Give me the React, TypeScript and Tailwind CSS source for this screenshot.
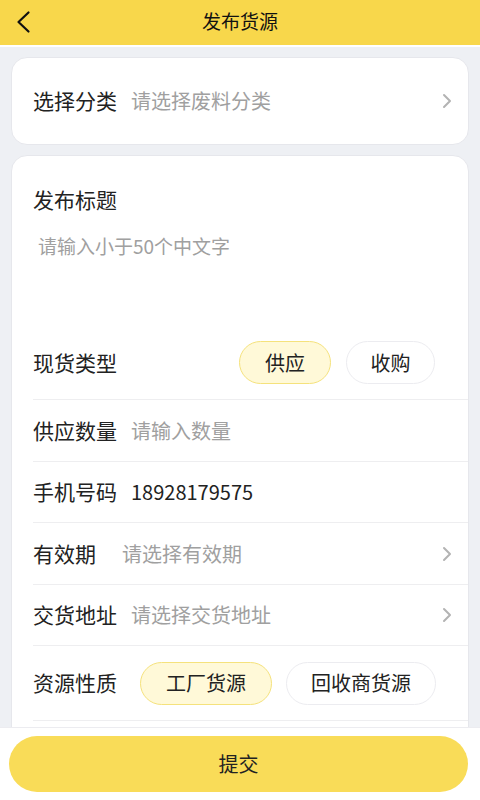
const font = { fontFamily: '"Noto Sans CJK SC", "Noto Sans", sans-serif' };

function Arrow() {
  return (
    <svg width="10" height="16" viewBox="0 0 10 16" className="shrink-0">
      <path d="M2 2 L8 8 L2 14" fill="none" stroke="#b3b3b3" strokeWidth="2" strokeLinecap="round" strokeLinejoin="round" />
    </svg>
  );
}

function BackIcon() {
  return (
    <svg width="16" height="24" viewBox="0 0 16 24" className="absolute left-[16px] top-[10px]">
      <path d="M12.5 2.5 L2.5 12 L12.5 21.5" fill="none" stroke="#111" strokeWidth="2.2" strokeLinecap="round" strokeLinejoin="round" />
    </svg>
  );
}

function Row({
  label,
  value,
  placeholder = true,
  arrow = false,
  gap = 'ml-[14px]',
  height = 'h-[62px]',
}: {
  label: string;
  value: string;
  placeholder?: boolean;
  arrow?: boolean;
  gap?: string;
  height?: string;
}) {
  return (
    <div className={`ml-[21px] flex ${height} items-center border-b border-[#eeeef0] pr-[16px]`}>
      <span className="text-[21px] text-[#222]">{label}</span>
      <span className={`${gap} flex-1 text-[20px] ${placeholder ? 'text-[#a0a0a0]' : 'text-[#222]'}`}>{value}</span>
      {arrow && <Arrow />}
    </div>
  );
}

export default function App() {
  return (
    <div className="flex h-[800px] w-[480px] flex-col overflow-hidden bg-[#eef0f4]" style={font}>
      <div className="relative flex h-[47px] shrink-0 items-center justify-center border-b-2 border-white bg-[#f8d74b] pb-[3px]">
        <BackIcon />
        <span className="text-[19px] text-[#111]">发布货源</span>
      </div>

      <div className="flex-1 overflow-hidden px-[11px] pt-[10px]">
        <div className="flex h-[88px] items-center rounded-2xl border border-[#e6e7ec] bg-white pl-[21px] pr-[16px]">
          <span className="text-[21px] text-[#222]">选择分类</span>
          <span className="ml-[14px] flex-1 text-[20px] text-[#a0a0a0]">请选择废料分类</span>
          <Arrow />
        </div>

        <div className="mt-[10px] rounded-2xl border border-[#e6e7ec] bg-white">
          <div className="px-[21px] pt-[28px] text-[21px] leading-[30px] text-[#222]">发布标题</div>
          <div className="h-[112px] px-[26px] pt-[17px] text-[19px] leading-[30px] text-[#a0a0a0]">请输入小于50个中文字</div>
          <div className="ml-[21px] flex h-[74px] items-center border-b border-[#eeeef0] pr-[33px]">
            <span className="flex-1 text-[21px] text-[#222]">现货类型</span>
            <div className="flex gap-[15px]">
              <span className="flex h-[43px] w-[92px] items-center justify-center rounded-full border border-[#f5e27c] bg-[#fff9d8] text-[20px] text-[#222]">
                供应
              </span>
              <span className="flex h-[43px] w-[89px] items-center justify-center rounded-full border border-[#ececf0] bg-white text-[20px] text-[#222]">
                收购
              </span>
            </div>
          </div>
          <Row label="供应数量" value="请输入数量" />
          <Row label="手机号码" value="18928179575" placeholder={false} height="h-[61px]" />
          <Row label="有效期" value="请选择有效期" arrow gap="ml-[26px]" />
          <Row label="交货地址" value="请选择交货地址" arrow height="h-[61px]" />
          <div className="ml-[21px] flex h-[75px] items-center gap-[14px] border-b border-[#eeeef0]">
            <span className="mr-[9px] text-[21px] text-[#222]">资源性质</span>
            <span className="flex h-[43px] w-[132px] items-center justify-center rounded-full border border-[#f5e27c] bg-[#fff9d8] text-[20px] text-[#222]">
              工厂货源
            </span>
            <span className="flex h-[43px] w-[150px] items-center justify-center rounded-full border border-[#ececf0] bg-white text-[20px] text-[#222]">
              回收商货源
            </span>
          </div>
          <div className="h-[60px]" />
        </div>
      </div>

      <div className="h-[73px] shrink-0 border-t border-[#ececf0] bg-white pl-[9px] pr-[12px] pt-[8px]">
        <button className="flex h-[56px] w-full items-center justify-center rounded-full bg-[#f9dc58] text-[20px] text-[#222]">
          提交
        </button>
      </div>
    </div>
  );
}
